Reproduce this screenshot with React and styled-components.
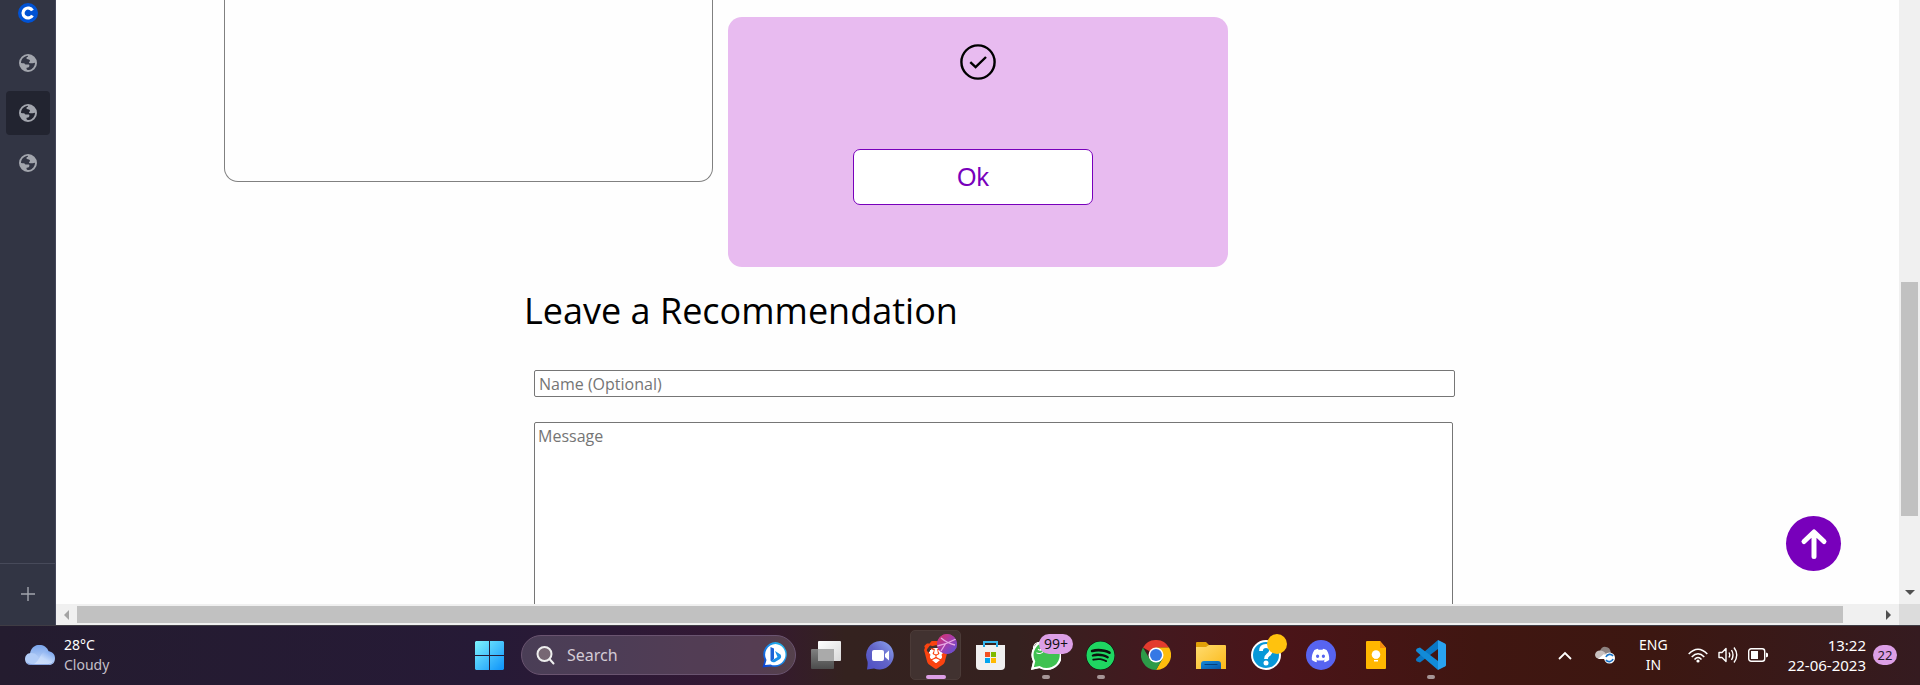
import React from "react";
import styled, { createGlobalStyle } from "styled-components";
import { FaSpotify, FaDiscord, FaWhatsapp } from "react-icons/fa";
import { SiBrave } from "react-icons/si";

const GlobalStyle = createGlobalStyle`
  *, *::before, *::after { box-sizing: border-box; }
  body { margin: 0; overflow: hidden; font-family: "Segoe UI", "Noto Sans", sans-serif; }
  button { font: inherit; padding: 0; border: 0; background: none; color: inherit; }
  svg { display: block; flex: none; }
`;

const Screen = styled.div`
  display: flex;
  flex-direction: column;
  height: 100vh;
  background: #fefefe;
`;

const Browser = styled.div`
  display: flex;
  flex: 1;
  min-height: 0;
`;

/* Browser tab rail */

const TabRail = styled.nav`
  display: flex;
  flex-direction: column;
  justify-content: space-between;
  flex: none;
  width: 56px;
  background: #323544;
  border-right: 1px solid #44475a;
`;

const TabList = styled.div`
  display: flex;
  flex-direction: column;
  align-items: center;
  gap: 6px;
  margin-top: -9px;
`;

const Tab = styled.button`
  display: grid;
  place-items: center;
  width: 44px;
  height: 44px;
  border-radius: 4px;
  color: #a2a5ad;
  background: ${(p) => (p.$active ? "#222430" : "transparent")};
`;

const NewTab = styled.button`
  display: grid;
  place-items: center;
  height: 62px;
  padding-bottom: 2px;
  color: #a2a5ad;
  border-top: 1px solid #474a5a;
`;

/* Page with its scroll bars */

const Viewport = styled.div`
  position: relative;
  display: grid;
  grid-template-columns: minmax(0, 1fr) 21px;
  grid-template-rows: minmax(0, 1fr) 21px;
  flex: 1;
  min-width: 0;
`;

const Page = styled.main`
  overflow: hidden;
  font-family: "Trebuchet MS", "Open Sans", sans-serif;
`;

const CardRow = styled.section`
  display: flex;
  align-items: flex-start;
  gap: 15px;
  padding-left: 168px;
`;

const OutlineCard = styled.div`
  width: 489px;
  height: 182px;
  border: 1px solid #808080;
  border-top: 0;
  border-radius: 0 0 14px 14px;
`;

const Popup = styled.div`
  display: flex;
  flex-direction: column;
  align-items: center;
  gap: 69px;
  width: 500px;
  height: 250px;
  margin-top: 17px;
  padding-top: 27px;
  border-radius: 14px;
  background: #e8bbf0;
`;

const OkButton = styled.button`
  width: 240px;
  height: 56px;
  margin-right: 10px;
  border: 1px solid #7800bb;
  border-radius: 7px;
  background: #fff;
  color: #7800bb;
  font-family: Arial, "Liberation Sans", sans-serif;
  font-size: 25px;
`;

const Recommend = styled.form`
  margin-left: 468px;
`;

const Title = styled.h1`
  margin: 22px 0 37px;
  font-size: 36px;
  line-height: 44px;
  font-weight: 400;
  color: #000;
`;

const field = `
  display: block;
  margin-left: 10px;
  border: 1px solid #767676;
  border-radius: 2px;
  background: #fff;
  font-family: inherit;
  font-size: 16px;
  &::placeholder { color: #757575; opacity: 1; }
`;

const NameInput = styled.input`
  ${field}
  width: 921px;
  height: 27px;
  padding: 0 4px;
`;

const MessageInput = styled.textarea`
  ${field}
  width: 919px;
  height: 280px;
  margin-top: 25px;
  padding: 2px 3px;
  line-height: 22px;
  resize: none;
`;

const ToTop = styled.button`
  position: absolute;
  right: 79px;
  bottom: 54px;
  display: grid;
  place-items: center;
  width: 55px;
  height: 55px;
  border-radius: 50%;
  background: #7800bb;
  color: #fff;
`;

const VerticalBar = styled.div`
  display: flex;
  flex-direction: column;
  align-items: center;
  justify-content: flex-end;
  background: #f0f0f0;
  gap: 71px;
  padding-bottom: 6px;
`;

const HorizontalBar = styled.div`
  display: flex;
  align-items: center;
  background: #f0f0f0;
`;

const Thumb = styled.div`
  background: #c1c1c1;
  ${(p) => (p.$vertical ? "width: 17px; height: 234px;" : "flex: 1; height: 17px; margin-right: 35px;")}
`;

const BarArrow = styled.button`
  display: grid;
  place-items: center;
  width: ${(p) => (p.$flat ? "17px" : "21px")};
  height: ${(p) => (p.$flat ? "11px" : "21px")};
  color: ${(p) => (p.$dim ? "#a3a3a3" : "#505050")};
`;

const Corner = styled.div`
  background: #dcdcdc;
`;

/* Taskbar */

const Taskbar = styled.footer`
  display: grid;
  grid-template-columns: 475px minmax(0, 1fr) auto;
  align-items: center;
  height: 60px;
  flex: none;
  padding-bottom: 1px;
  border-top: 1px solid #3f3c44;
  color: #fff;
  font-size: 14px;
  line-height: 20px;
  background: linear-gradient(90deg, #241c2f 0%, #261a36 25%, #2c1936 32%, #351833 39%, #34221f 44%, #35211f 53%, #43191f 60%, #4a1418 67%, #401611 77%, #3c1711 86%, #351b20 100%);
`;

const Weather = styled.div`
  display: flex;
  align-items: center;
  gap: 9px;
  padding-left: 25px;
`;

const Lines = styled.div`
  text-align: ${(p) => p.$align || "left"};
`;

const Muted = styled.div`
  color: #c3bfc8;
`;

const Dock = styled.div`
  display: flex;
  align-items: center;
`;

const SearchBox = styled.label`
  display: flex;
  align-items: center;
  gap: 12px;
  width: 275px;
  height: 40px;
  margin: 0 2px 0 17px;
  padding: 0 7px 0 14px;
  border: 1px solid #6a5470;
  border-radius: 20px;
  background: rgba(255, 255, 255, 0.16);
`;

const SearchInput = styled.input`
  flex: 1;
  min-width: 0;
  padding: 0;
  border: 0;
  outline: 0;
  background: none;
  font-family: inherit;
  font-size: 16px;
  color: #fff;
  &::placeholder { color: #d3cbd5; opacity: 1; }
`;

const AppTile = styled.button`
  position: relative;
  display: grid;
  place-items: center;
  width: 51px;
  height: 50px;
  margin: 0 2px;
  border-radius: 5px;
  border: 1px solid ${(p) => (p.$active ? "#4b3b38" : "transparent")};
  background: ${(p) => (p.$active ? "#413230" : "none")};
`;

const Running = styled.span`
  position: absolute;
  bottom: 0;
  left: 50%;
  width: ${(p) => (p.$wide ? "20px" : "8px")};
  height: 4px;
  border-radius: 2px;
  transform: translateX(-50%);
  background: ${(p) => (p.$wide ? "#dc9fe6" : "#a69596")};
`;

const CountBadge = styled.span`
  position: absolute;
  top: 3px;
  left: 18px;
  width: 34px;
  height: 20px;
  border-radius: 10px;
  background: #dc9fe6;
  color: #111;
  text-align: center;
  line-height: 20px;
`;

const DotBadge = styled.span`
  position: absolute;
  top: 3px;
  right: 3px;
  width: 20px;
  height: 20px;
  border-radius: 50%;
  overflow: hidden;
  background: ${(p) => p.$fill};
`;

const Tray = styled.div`
  display: flex;
  align-items: center;
  gap: 20px;
  padding-right: 23px;
`;

const TrayGroup = styled.div`
  display: flex;
  align-items: center;
  gap: 10px;
`;

const HiddenIcons = styled(TrayGroup)`
  gap: 23px;
  margin-right: 4px;
`;

const ClockGroup = styled(TrayGroup)`
  gap: 7px;
`;

const Clock = styled.time`
  font-size: 15px;
  text-align: right;
  white-space: nowrap;
`;

const DayBadge = styled.span`
  width: 24px;
  height: 20px;
  border-radius: 10px;
  background: #dc9fe6;
  color: #26182a;
  font-size: 13px;
  text-align: center;
`;

/* Drawings */

const Globe = () => (
  <svg width="18" height="18" viewBox="0 0 54 54">
    <path
      fill="currentColor"
      fillRule="evenodd"
      d="M27 0a27 27 0 1 1 0 54a27 27 0 1 1 0-54ZM6 27C6 15 15 6 27 5V8C22 8 21 14 24 15C27 17 33 16 33 20C33 24 28 22 31 27C35 29 40 28 48 26C48 36 41 46 30 48C24 48 21 46 23 41C30 41 32 38 31 33C30 30 22 33 18 31C17 27 14 28 6 27Z"
    />
  </svg>
);

const CoinMark = () => (
  <svg width="20" height="20" viewBox="0 0 20 20">
    <circle cx="10" cy="10" r="10" fill="#0052d4" />
    <path d="M14.4 7.6A5 5 0 1 0 14.4 12.4" fill="none" stroke="#fff" strokeWidth="3.2" />
  </svg>
);

const Plus = () => (
  <svg width="14" height="14" viewBox="0 0 14 14">
    <path d="M7 0V14M0 7H14" stroke="currentColor" strokeWidth="1.4" />
  </svg>
);

const CheckCircle = () => (
  <svg width="36" height="36" viewBox="0 0 36 36" fill="none" stroke="#000" strokeWidth="2.4">
    <circle cx="18" cy="18" r="16.6" />
    <path d="M10.3 18.2L15.6 23.2L26 13" />
  </svg>
);

const UpArrow = () => (
  <svg width="30" height="32" viewBox="0 0 30 32" fill="none" stroke="currentColor" strokeWidth="5" strokeLinecap="round" strokeLinejoin="round">
    <path d="M15 28.5V4.5M5 13.5L15 4L25 13.5" />
  </svg>
);

const Triangle = ({ d, w = 10, h = 10 }) => (
  <svg width={w} height={h} viewBox={`0 0 ${w} ${h}`}>
    <path d={d} fill="currentColor" />
  </svg>
);

const Cloud = () => (
  <svg width="30" height="20" viewBox="0 0 30 20">
    <defs>
      <linearGradient id="cloudBack" x1="0" y1="0" x2="0" y2="1">
        <stop stopColor="#7aa5ec" />
        <stop offset="1" stopColor="#bcd3f8" />
      </linearGradient>
      <linearGradient id="cloudFront" x1="1" y1="0" x2="0" y2="1">
        <stop stopColor="#6b9bec" />
        <stop offset=".5" stopColor="#c5dafb" />
        <stop offset="1" stopColor="#d4e2fa" />
      </linearGradient>
    </defs>
    <path d="M5 9C6 -3 22 -3 24 8V16H5Z" fill="url(#cloudBack)" />
    <path d="M6 20C-2 20 -2 8 6 8C11 8 13 11 14 14L18 20Z" fill="#b2cdf8" />
    <path d="M5 20C10 20 13 16 16 10C19 4 30 5 30 13C30 18 27 20 24 20Z" fill="url(#cloudFront)" />
    <path d="M2 18Q4 19.600 7 19.600H23Q27 19.600 28.500 17" fill="none" stroke="#6f8fd6" strokeWidth=".8" />
  </svg>
);

const WindowsMark = () => (
  <svg width="29" height="29" viewBox="0 0 29 29">
    <defs>
      <linearGradient id="win" x2="1" y2="1" gradientUnits="userSpaceOnUse" x1="0" y1="0" gradientTransform="scale(29)">
        <stop stopColor="#7df3fd" />
        <stop offset=".55" stopColor="#41bdfc" />
        <stop offset="1" stopColor="#0d93fa" />
      </linearGradient>
    </defs>
    <path fill="url(#win)" d="M1 0H14V14H0V1ZM15 0H28L29 1V14H15ZM0 15H14V29H1L0 28ZM15 15H29V28L28 29H15Z" />
  </svg>
);

const Magnifier = () => (
  <svg width="19" height="19" viewBox="0 0 19 19" fill="none" stroke="#eee" strokeWidth="2" strokeLinecap="round">
    <circle cx="8.500" cy="8" r="7" fill="#776773" />
    <path d="M13.500 13L17.500 17.500" />
  </svg>
);

const Bing = () => (
  <svg width="26" height="26" viewBox="0 0 26 26">
    <defs>
      <linearGradient id="bing" x1="0" y1="1" x2="1" y2="0">
        <stop stopColor="#0b3bd0" />
        <stop offset=".5" stopColor="#1786e8" />
        <stop offset="1" stopColor="#29c7ee" />
      </linearGradient>
    </defs>
    <path d="M13.500 0A12.500 12.500 0 1 1 9 24.500L.5 25.500L2.500 18A12.500 12.500 0 0 1 13.500 0Z" fill="url(#bing)" />
    <path d="M13.500 2A10.700 10.700 0 1 1 8.500 22.500L3 23L4.500 18A10.700 10.700 0 0 1 13.500 2Z" fill="#fff" />
    <path d="M8.500 5L12 6.500V17L9.500 19.500L8.500 18.500Z" fill="#1d62d6" />
    <path d="M13 9L18.500 12.500Q20 15 18 17L13 20Q10.500 21 9 19L15.500 15Z" fill="#1b8fe8" />
  </svg>
);

const TaskView = () => (
  <svg width="30" height="28" viewBox="0 0 30 28">
    <defs>
      <linearGradient id="viewFront" x2="1" y2="1">
        <stop stopColor="#fff" />
        <stop offset="1" stopColor="#d9d9d9" />
      </linearGradient>
      <linearGradient id="viewBack" x2="0" y2="1">
        <stop stopColor="#808080" />
        <stop offset="1" stopColor="#4c4c4c" />
      </linearGradient>
    </defs>
    <rect y="8" width="23" height="20" rx="1" fill="url(#viewBack)" />
    <rect x="7" width="23" height="20" rx="1" fill="url(#viewFront)" />
    <path d="M7 8H23V20H7Z" fill="#aaa" />
  </svg>
);

const Chat = () => (
  <svg width="29" height="29" viewBox="0 0 29 29">
    <defs>
      <linearGradient id="chat" x1="1" x2="0" y2="1">
        <stop stopColor="#8fa8f2" />
        <stop offset=".5" stopColor="#6264c8" />
        <stop offset="1" stopColor="#4d4ec4" />
      </linearGradient>
    </defs>
    <path d="M14.500 0A14.300 14.300 0 1 1 8 27.500L1 28.500Q2 23 1.500 20.500A14.300 14.300 0 0 1 14.500 0Z" fill="url(#chat)" />
    <rect x="6" y="9" width="12" height="11" rx="2" fill="#fff" />
    <path d="M19 13L23 9.500V19.500L19 16Z" fill="#fff" />
  </svg>
);

const BraveMark = styled(SiBrave)`
  width: 28px;
  height: 30px;
  color: #fb4310;
  background: radial-gradient(circle at 50% 52%, #fff 36%, transparent 37%);
`;

const ProfileArt = () => (
  <svg width="20" height="20" viewBox="0 0 20 20">
    <defs>
      <linearGradient id="profile" x1="0" y1="0" x2="1" y2="1">
        <stop stopColor="#e0305f" />
        <stop offset=".5" stopColor="#a43dae" />
        <stop offset="1" stopColor="#4f56dc" />
      </linearGradient>
    </defs>
    <rect width="20" height="20" fill="url(#profile)" />
    <path d="M0 12Q10 10 19 5M4 4Q10 9 18 11M9 9L4 17" fill="none" stroke="#e7a9e5" strokeWidth="1.300" />
  </svg>
);

const Store = () => (
  <svg width="29" height="29" viewBox="0 0 29 29">
    <path d="M8 5V1H21V5" fill="none" stroke="#36b7ef" strokeWidth="2" />
    <path d="M0 4H29V25Q29 29 25 29H4Q0 29 0 25Z" fill="#f0f0f0" />
    <path d="M8 4V6M21 4V6" stroke="#1ba4e4" strokeWidth="2" />
    <path d="M9 11H14V16H9Z" fill="#f25022" />
    <path d="M15 11H20V16H15Z" fill="#7fba00" />
    <path d="M9 17H14V22H9Z" fill="#00a4ef" />
    <path d="M15 17H20V22H15Z" fill="#ffb900" />
  </svg>
);

const WhatsApp = () => (
  <svg width="30" height="30" viewBox="0 0 30 30">
    <path d="M15 0A15 15 0 1 1 8.500 28L0 30L2 21.500A15 15 0 0 1 15 0Z" fill="#fff" />
    <path d="M15 2.600A12.400 12.400 0 1 1 8.800 25.200L3.700 26.400L5 21.500A12.400 12.400 0 0 1 15 2.600Z" fill="#3fc251" />
    <FaWhatsapp x="1" y="1" width="27" height="27" color="#fff" />
    <path d="M15 2.600A12.400 12.400 0 1 1 8.800 25.200L3.700 26.400L5 21.500A12.400 12.400 0 0 1 15 2.600Z" fill="none" stroke="#3fc251" strokeWidth="4" />
    <path d="M15 1A14 14 0 1 1 8.500 27L1.500 28.500L3.200 21.500A14 14 0 0 1 15 1Z" fill="none" stroke="#fff" strokeWidth="2" />
  </svg>
);

const SpotifyMark = styled(FaSpotify)`
  width: 29px;
  height: 29px;
  border-radius: 50%;
  color: #1fd661;
  background: #0d120e;
`;

const Chrome = () => (
  <svg width="30" height="30" viewBox="0 0 30 30">
    <path d="M15 15L2 7.500A15 15 0 0 1 28 7.500H15Z" fill="#e33b2e" />
    <path d="M15 15L15 7.500H28A15 15 0 0 1 15 30L21.500 18.700Z" fill="#fdbd0d" />
    <path d="M15 15L21.500 18.700L15 30A15 15 0 0 1 2 7.500L8.500 18.700Z" fill="#2c9b48" />
    <circle cx="15" cy="15" r="7.500" fill="#fff" />
    <circle cx="15" cy="15" r="6" fill="#3578e5" />
  </svg>
);

const Folder = () => (
  <svg width="30" height="27" viewBox="0 0 30 27">
    <defs>
      <linearGradient id="folder" x2="1" y2="1">
        <stop stopColor="#ffdc70" />
        <stop offset="1" stopColor="#fbb917" />
      </linearGradient>
      <linearGradient id="folderBase" x2="1" y2="1">
        <stop stopColor="#1689d8" />
        <stop offset="1" stopColor="#0858aa" />
      </linearGradient>
    </defs>
    <path d="M0 1Q0 0 1 0H10L13 3V8H0Z" fill="#e0a008" />
    <path d="M0 5H10L13 3H29Q30 3 30 4V27H0Z" fill="url(#folder)" />
    <path d="M5 27V22Q5 19 8 19H22Q25 19 25 22V27Z" fill="url(#folderBase)" />
    <path d="M9 22.500H21" stroke="#063f7c" strokeWidth="1.200" strokeLinecap="round" />
  </svg>
);

const Help = () => (
  <svg width="30" height="30" viewBox="0 0 30 30">
    <circle cx="15" cy="15" r="14" fill="#0898d8" stroke="#fff" strokeWidth="2" />
    <path d="M10 11Q10 6 15 6Q20 6 20 10.500Q20 13 17 15Q15 16.500 15 19" fill="none" stroke="#fff" strokeWidth="3.800" />
    <circle cx="15" cy="23" r="2.500" fill="#fff" />
  </svg>
);

const DiscordDisc = styled.span`
  display: grid;
  place-items: center;
  width: 30px;
  height: 30px;
  border-radius: 50%;
  background: #5764f1;
  color: #fff;
  font-size: 19px;
`;

const Keep = () => (
  <svg width="20" height="28" viewBox="0 0 20 28">
    <path d="M1 0H14L20 7V27Q20 28 19 28H1Q0 28 0 27V1Q0 0 1 0Z" fill="#ffb700" />
    <path d="M14 0L20 7H14Z" fill="#f28c0f" />
    <circle cx="10" cy="13.500" r="4.300" fill="#fff" />
    <path d="M8 15H12V17.500H8ZM8 19H12V20.500H8Z" fill="#fff" />
  </svg>
);

const Code = () => (
  <svg width="30" height="30" viewBox="0 0 30 30">
    <path d="M22 0V9L4 22.500L1 21.500Q-1 19.500 1 18Z" fill="#0a77c4" />
    <path d="M22 30V21L4 7.500L1 8.500Q-1 10.500 1 12Z" fill="#128bd8" />
    <path d="M22 0L29 3.500Q30 4 30 5V25Q30 26 29 26.500L22 30Z" fill="#29a3f1" />
  </svg>
);

const Chevron = () => (
  <svg width="14" height="9" viewBox="0 0 14 9">
    <path d="M1 8L7 2L13 8" fill="none" stroke="#fff" strokeWidth="1.800" />
  </svg>
);

const CloudSync = () => (
  <svg width="20" height="18" viewBox="0 0 20 18">
    <path d="M5 5Q7 0 11 1Q15 1 16 7V11H5Z" fill="#8d8280" />
    <path d="M4 13Q0 12 0 8.500Q1 4.500 5 4.500Q9 4.500 11 8L9 13Z" fill="#c9c1c0" />
    <path d="M3 13L9 8L14 13Z" fill="#fff" />
    <circle cx="14.500" cy="12" r="5.500" fill="#fff" />
    <path d="M11 11A4 4 0 0 1 18 10M18 13A4 4 0 0 1 11 14" fill="none" stroke="#1773c8" strokeWidth="1.700" />
  </svg>
);

const Wifi = () => (
  <svg width="20" height="15" viewBox="0 0 20 15" fill="none" stroke="#fff" strokeWidth="1.500">
    <path d="M.7 6Q10-3.500 19.300 6M3.700 9Q10 2.500 16.300 9M6.500 11.500Q10 7.500 13.500 11.500" />
    <circle cx="10" cy="13" r="1.600" fill="#fff" stroke="none" />
  </svg>
);

const Speaker = () => (
  <svg width="20" height="18" viewBox="0 0 20 18" fill="none" stroke="#fff" strokeWidth="1.400">
    <path d="M1 6.500H4L8 2.500V15.500L4 11.500H1Z" strokeLinejoin="round" />
    <path d="M11 6.500Q12.500 9 11 11.500M13.500 4Q16.500 9 13.500 14M16 1.500Q21.500 9 16 16.500" />
  </svg>
);

const Battery = () => (
  <svg width="20" height="14" viewBox="0 0 20 14">
    <rect x=".7" y=".7" width="16" height="12.600" rx="2.500" fill="none" stroke="#fff" strokeWidth="1.400" />
    <rect x="3" y="3" width="7" height="8" fill="#fff" />
    <path d="M18 4.500L20 5.500V8.500L18 9.500Z" fill="#fff" />
  </svg>
);

const apps = [
  { name: "Task view", icon: <TaskView /> },
  { name: "Chat", icon: <Chat /> },
  { name: "Brave", icon: <BraveMark />, active: true, badge: <DotBadge $fill="#a43dae"><ProfileArt /></DotBadge> },
  { name: "Store", icon: <Store /> },
  { name: "WhatsApp", icon: <WhatsApp />, running: true, badge: <CountBadge>99+</CountBadge> },
  { name: "Spotify", icon: <SpotifyMark />, running: true },
  { name: "Chrome", icon: <Chrome /> },
  { name: "Files", icon: <Folder /> },
  { name: "Help", icon: <Help />, badge: <DotBadge $fill="#ffc20e" /> },
  { name: "Discord", icon: <DiscordDisc><FaDiscord /></DiscordDisc> },
  { name: "Keep", icon: <Keep /> },
  { name: "Code", icon: <Code />, running: true },
];

export default function App() {
  return (
    <Screen>
      <GlobalStyle />
      <Browser>
        <TabRail aria-label="Tabs">
          <TabList>
            <Tab aria-label="Coin tab"><CoinMark /></Tab>
            <Tab aria-label="Tab 2"><Globe /></Tab>
            <Tab aria-label="Tab 3" $active><Globe /></Tab>
            <Tab aria-label="Tab 4"><Globe /></Tab>
          </TabList>
          <NewTab aria-label="New tab"><Plus /></NewTab>
        </TabRail>
        <Viewport>
          <Page>
            <CardRow>
              <OutlineCard />
              <Popup>
                <CheckCircle />
                <OkButton>Ok</OkButton>
              </Popup>
            </CardRow>
            <Recommend>
              <Title>Leave a Recommendation</Title>
              <NameInput aria-label="Name" placeholder="Name (Optional)" />
              <MessageInput aria-label="Message" placeholder="Message" />
            </Recommend>
          </Page>
          <VerticalBar>
            <Thumb $vertical />
            <BarArrow $flat aria-label="Scroll down"><Triangle d="M0 0H10L5 5Z" h={5} /></BarArrow>
          </VerticalBar>
          <HorizontalBar>
            <BarArrow $dim aria-label="Scroll left"><Triangle d="M5 0V10L0 5Z" w={5} /></BarArrow>
            <Thumb />
            <BarArrow aria-label="Scroll right"><Triangle d="M0 0L5 5L0 10Z" w={5} /></BarArrow>
          </HorizontalBar>
          <Corner />
          <ToTop aria-label="Back to top"><UpArrow /></ToTop>
        </Viewport>
      </Browser>
      <Taskbar>
        <Weather>
          <Cloud />
          <Lines>
            <div>28°C</div>
            <Muted>Cloudy</Muted>
          </Lines>
        </Weather>
        <Dock>
          <button aria-label="Start"><WindowsMark /></button>
          <SearchBox>
            <Magnifier />
            <SearchInput aria-label="Search" placeholder="Search" />
            <Bing />
          </SearchBox>
          {apps.map((app) => (
            <AppTile key={app.name} aria-label={app.name} $active={app.active}>
              {app.icon}
              {app.badge}
              {(app.active || app.running) && <Running $wide={app.active} />}
            </AppTile>
          ))}
        </Dock>
        <Tray>
          <HiddenIcons>
            <Chevron />
            <CloudSync />
          </HiddenIcons>
          <Lines $align="center">
            <div>ENG</div>
            <div>IN</div>
          </Lines>
          <TrayGroup>
            <Wifi />
            <Speaker />
            <Battery />
          </TrayGroup>
          <ClockGroup>
            <Clock>
              13:22
              <br />
              22-06-2023
            </Clock>
            <DayBadge>22</DayBadge>
          </ClockGroup>
        </Tray>
      </Taskbar>
    </Screen>
  );
}
